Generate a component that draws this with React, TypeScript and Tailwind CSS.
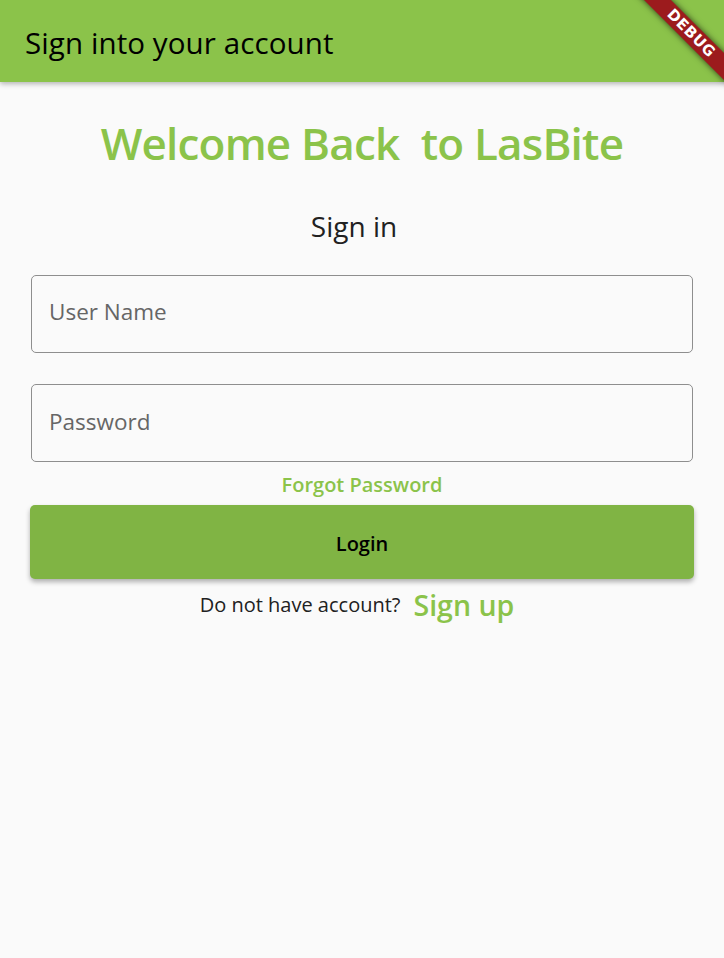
import React from "react";

export default function App() {
  const font = { fontFamily: '"Open Sans", "Noto Sans", sans-serif' };
  return (
    <div
      className="relative w-full h-[958px] overflow-hidden bg-[#fafafa] flex flex-col"
      style={font}
    >
      <header className="h-[82px] shrink-0 bg-[#8bc34a] flex items-center pl-[25px] shadow-[0_2px_5px_rgba(0,0,0,0.28)] relative z-10">
        <h1 className="text-[29.5px] leading-none text-black font-medium tracking-[0.1px] pt-[3px]">
          Sign into your account
        </h1>
      </header>

      <main className="flex flex-col px-[30px]">
        <h2 className="mt-[37px] text-center text-[44px] leading-[48px] font-semibold text-[#8bc34a] tracking-[-0.8px] whitespace-pre">
          {"Welcome Back  to LasBite"}
        </h2>
        <p className="mt-[44px] pr-[16px] text-center text-[28px] leading-[30px] text-[#212121]">
          Sign in
        </p>

        <div className="mt-[34px] h-[78px] mx-[1px] rounded-[5px] border border-[#8e8e8e] flex items-center pl-[17px] pb-[3px]">
          <span className="text-[22.5px] leading-none text-[#666666]">User Name</span>
        </div>
        <div className="mt-[31px] h-[78px] mx-[1px] rounded-[5px] border border-[#8e8e8e] flex items-center pl-[17px] pb-[1px]">
          <span className="text-[22.5px] leading-none text-[#666666]">Password</span>
        </div>

        <p className="mt-[12px] text-center text-[20px] leading-[21px] font-semibold text-[#8bc34a]">
          Forgot Password
        </p>

        <button className="mt-[10px] h-[74px] w-full rounded-[5px] bg-[#80b444] shadow-[0_3px_5px_rgba(0,0,0,0.3)] flex items-center justify-center pt-[3px]">
          <span className="text-[20px] leading-none font-semibold text-black">Login</span>
        </button>

        <div className="mt-[9px] flex items-center justify-center pl-[2px]">
          <span className="text-[20px] leading-none text-[#212121] pt-[1px]">
            Do not have account?
          </span>
          <span className="pl-[13px] pr-[12px] text-[28.5px] leading-[30px] font-semibold text-[#8bc34a] pt-[2px]">
            Sign up
          </span>
        </div>
      </main>

      <div className="absolute left-[611px] top-[24px] w-[160px] h-[19px] rotate-45 bg-[#9c1b1d] shadow-[0_0_6px_rgba(0,0,0,0.7)] flex items-center justify-center z-20">
        <span
          className="text-[15px] leading-none font-extrabold text-white tracking-[0.5px]"
          style={{ fontFamily: '"DejaVu Sans", "Open Sans", sans-serif' }}
        >
          DEBUG
        </span>
      </div>
    </div>
  );
}
